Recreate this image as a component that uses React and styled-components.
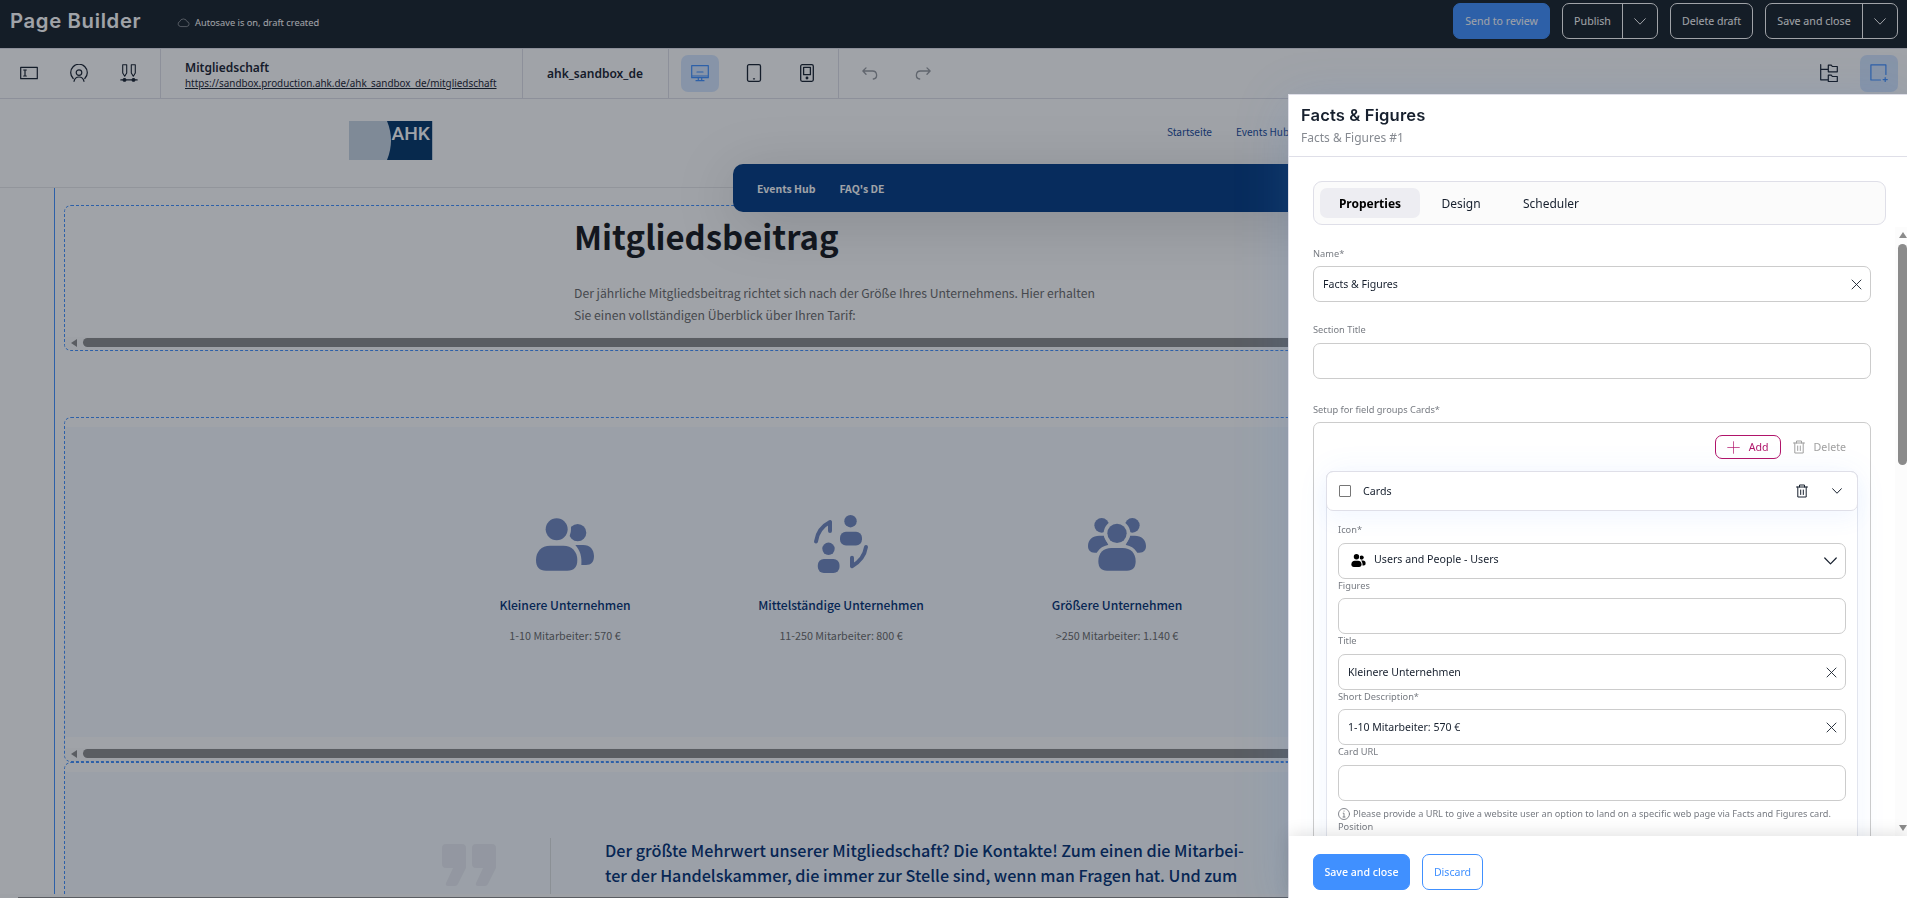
import React, { useState } from 'react';
import styled, { createGlobalStyle, ThemeProvider } from 'styled-components';

const theme = {
    ui: '"Noto Sans", sans-serif',
    title: 'Inter, "Noto Sans", sans-serif',
    site: '"Noto Sans CJK SC", "Noto Sans", sans-serif',
    colors: {
        dark: '#172029',
        text: '#17202e',
        muted: '#777b82',
        line: '#dfdfe8',
        field: '#cccccc',
        primary: '#4090ff',
        accent: '#b0146a',
        brand: '#002f73',
        figure: '#7188c0',
        soft: '#f7fbff',
    },
};

const GlobalStyle = createGlobalStyle`
    *, *::before, *::after {
        box-sizing: border-box;
    }
    html, body, #root {
        height: 100%;
    }
    body {
        margin: 0;
        overflow: hidden;
        background: #fff;
        color: ${theme.colors.text};
        font-family: ${theme.ui};
        font-size: 10.67px;
    }
    button, input {
        font: inherit;
    }
    p, h1, h2, h3 {
        margin: 0;
    }
`;

const Page = styled.div`
    display: flex;
    flex-direction: column;
    height: 100vh;
    overflow: hidden;
`;

const TopBar = styled.header`
    align-items: flex-start;
    background: ${({ theme }) => theme.colors.dark};
    display: flex;
    flex: 0 0 48px;
    padding: 3px 9px 0 10px;
`;

TopBar.Title = styled.h1`
    color: #fff;
    font-family: ${({ theme }) => theme.title};
    font-size: 20.3px;
    font-weight: 600;
    letter-spacing: .65px;
    line-height: 36px;
    white-space: nowrap;
    width: 167px;
`;

TopBar.Status = styled.div`
    align-items: center;
    color: #fff;
    display: flex;
    flex: 1;
    font-size: 9.25px;
    gap: 5px;
    height: 38px;
`;

TopBar.Actions = styled.div`
    display: flex;
    gap: 12px;
`;

const Button = styled.button`
    align-items: center;
    background: ${({ $filled, theme }) => ($filled ? theme.colors.primary : 'transparent')};
    border: 1px solid ${({ $filled, $tone, theme }) => ($filled ? theme.colors.primary : $tone || '#fff')};
    border-radius: 7px;
    color: ${({ $filled, $tone }) => ($filled ? '#fff' : $tone || '#fff')};
    display: flex;
    font-size: 10.6px;
    font-weight: ${({ $strong }) => ($strong ? 500 : 400)};
    height: ${({ $small }) => ($small ? 24 : 36)}px;
    justify-content: center;
    padding: 0 0 ${({ $small }) => ($small ? 0 : 1)}px;
    white-space: nowrap;
    width: ${({ $width }) => $width}px;
`;

const SplitButton = styled.div`
    border: 1px solid #fff;
    border-radius: 7px;
    color: #fff;
    display: flex;
    height: 36px;
    width: ${({ $width }) => $width}px;
`;

SplitButton.Label = styled.span`
    align-items: center;
    border-right: 1px solid #fff;
    display: flex;
    flex: 1;
    justify-content: center;
    padding-bottom: 1px;
`;

SplitButton.Toggle = styled.span`
    align-items: center;
    display: flex;
    justify-content: center;
    width: 34px;
`;

const Toolbar = styled.div`
    border: 1px solid ${({ theme }) => theme.colors.line};
    border-width: 1px 0;
    display: flex;
    flex: 0 0 51px;
`;

Toolbar.Group = styled.div`
    align-items: center;
    border-right: ${({ $last, theme }) => ($last ? 0 : `1px solid ${theme.colors.line}`)};
    display: flex;
    gap: ${({ $gap }) => $gap || 0}px;
    padding-left: ${({ $pad }) => $pad}px;
    width: ${({ $width }) => ($width ? `${$width}px` : 'auto')};
`;

Toolbar.End = styled.div`
    display: flex;
    gap: 12px;
    margin-left: auto;
    padding: 6px 9px 0 0;
`;

const IconButton = styled.button`
    align-items: center;
    background: ${({ $active }) => ($active ? '#d6e7ff' : 'transparent')};
    border: 0;
    border-radius: 7px;
    color: ${({ $active, $faded, theme }) => ($active ? theme.colors.primary : $faded ? '#96999f' : theme.colors.text)};
    display: flex;
    height: 37px;
    justify-content: center;
    padding: 0 0 1px;
    width: 38px;
`;

const PageInfo = styled.div`
    display: flex;
    flex-direction: column;
    padding-top: 4px;
`;

PageInfo.Name = styled.strong`
    font-size: 12px;
    font-weight: 600;
    line-height: 16px;
`;

PageInfo.Url = styled.a`
    color: ${({ theme }) => theme.colors.text};
    font-size: 9.9px;
    line-height: 15px;
    text-decoration: underline;
`;

const SiteHeader = styled.div`
    align-items: flex-start;
    border-bottom: 1px solid #e8e8ea;
    display: flex;
    flex: 0 0 89px;
    justify-content: space-between;
    padding: 22px 0 0 349px;
    position: relative;
`;

const SiteNav = styled.nav`
    color: #17489a;
    display: flex;
    font-family: ${({ theme }) => theme.site};
    font-size: 10.1px;
    gap: 24px;
    line-height: 22px;
    white-space: nowrap;
    width: 740px;
`;

const SubMenu = styled.div`
    align-items: center;
    background: #003a82;
    border-radius: 10px;
    box-shadow: 0 10px 60px rgba(0, 0, 0, .17);
    color: #fff;
    display: flex;
    font-family: ${({ theme }) => theme.site};
    font-size: 10.5px;
    font-weight: 700;
    gap: 24px;
    height: 48px;
    left: 733px;
    padding: 1px 0 0 24px;
    position: absolute;
    right: 0;
    top: 65px;
    z-index: 1;
`;

const Canvas = styled.main`
    border-left: 1px solid ${({ theme }) => theme.colors.primary};
    display: flex;
    flex: 1;
    flex-direction: column;
    font-family: ${({ theme }) => theme.site};
    margin-left: 54px;
    min-height: 0;
    overflow: hidden;
    padding: 17px 0 0 9px;
`;

const Section = styled.section`
    border: 1px dashed ${({ theme }) => theme.colors.primary};
    border-radius: 7px 0 0 7px;
    display: flex;
    flex: 0 0 ${({ $height }) => $height}px;
    flex-direction: column;
    margin-bottom: ${({ $after }) => $after || 0}px;
    overflow: hidden;
    padding-top: ${({ $top }) => $top || 0}px;
`;

const Intro = styled.div`
    flex: 1;
    padding: 10px 0 0 509px;
`;

Intro.Title = styled.h2`
    color: #14161a;
    font-size: 32.9px;
    font-weight: 700;
    line-height: 40px;
    margin-bottom: 26px;
`;

Intro.Text = styled.p`
    color: #696969;
    font-size: 12.2px;
    line-height: 22px;
    white-space: pre-line;
`;

const Facts = styled.div`
    background: ${({ theme }) => theme.colors.soft};
    display: grid;
    flex: 0 0 310px;
    grid-template-columns: repeat(3, 276px);
    margin-bottom: 11px;
    padding: 87px 0 0 362px;
`;

Facts.Card = styled.div`
    align-items: center;
    display: flex;
    flex-direction: column;
`;

Facts.Icon = styled.div`
    align-items: center;
    display: flex;
    height: 60px;
    justify-content: center;
    margin-bottom: 21px;
`;

Facts.Title = styled.h3`
    color: ${({ theme }) => theme.colors.brand};
    font-size: 12.1px;
    font-weight: 500;
    line-height: 20px;
    margin-bottom: 11px;
`;

Facts.Text = styled.p`
    color: #696969;
    font-size: 10.75px;
    line-height: 20px;
`;

const ScrollRow = styled.div`
    align-items: center;
    background: #fcfcfc;
    display: flex;
    flex: 0 0 13px;
    gap: 6px;
    padding: 0 0 2px 6px;
`;

ScrollRow.Thumb = styled.div`
    background: #8b8b8b;
    border-radius: 5px;
    flex: 1;
    height: 9px;
`;

const Quote = styled.div`
    background: ${({ theme }) => theme.colors.soft};
    display: flex;
    flex: 1;
    padding: 66px 0 0 377px;
`;

Quote.Mark = styled.div`
    padding-top: 6px;
    width: 108px;
`;

Quote.Text = styled.p`
    border-left: 1px solid #dcdfe0;
    color: ${({ theme }) => theme.colors.brand};
    font-size: 16.18px;
    font-weight: 500;
    line-height: 25px;
    padding-left: 54px;
    white-space: pre-line;
`;

const BottomScroll = styled.div`
    background: #fcfcfc;
    flex: 0 0 4px;
    padding: 3px 0 0 18px;
    &::after {
        background: #8b8b8b;
        content: '';
        display: block;
        height: 1px;
    }
`;

const Scrim = styled.div`
    background: rgba(18, 25, 37, .4);
    inset: 0;
    position: fixed;
    z-index: 2;
`;

const Panel = styled.aside`
    background: #fff;
    border: 1px solid ${({ theme }) => theme.colors.line};
    border-width: 1px 0 0 1px;
    bottom: 0;
    box-shadow: 0 10px 50px rgba(74, 124, 200, .22);
    display: flex;
    flex-direction: column;
    position: fixed;
    right: 0;
    top: 94px;
    width: 619px;
    z-index: 3;
`;

Panel.Header = styled.div`
    border-bottom: 1px solid ${({ theme }) => theme.colors.line};
    flex: 0 0 62px;
    padding: 9px 12px 0;
`;

Panel.Title = styled.h2`
    font-family: ${({ theme }) => theme.title};
    font-size: 16.6px;
    font-weight: 600;
    letter-spacing: .12px;
    line-height: 22px;
`;

Panel.Subtitle = styled.p`
    color: #868a91;
    font-size: 12px;
    line-height: 18px;
    padding-top: 3px;
`;

Panel.Body = styled.div`
    display: flex;
    flex: 1;
    min-height: 0;
`;

Panel.Form = styled.div`
    flex: 1;
    overflow: hidden;
    padding: 22px 24px 0;
`;

Panel.Footer = styled.div`
    background: #fff;
    box-shadow: 0 -2px 16px rgba(0, 0, 0, .12);
    display: flex;
    flex: 0 0 62px;
    gap: 12px;
    padding: 18px 24px 0;
    position: relative;
`;

const Tabs = styled.div`
    background: #fbfbfb;
    border: 1px solid ${({ theme }) => theme.colors.line};
    border-radius: 9px;
    display: flex;
    flex: 0 0 44px;
    margin: 24px 21px 0 24px;
    padding: 6px;
`;

Tabs.Item = styled.button`
    background: ${({ $active }) => ($active ? '#ededf2' : 'transparent')};
    border: 0;
    border-radius: 7px;
    color: ${({ $active, theme }) => ($active ? '#000' : theme.colors.text)};
    font-size: 12px;
    font-weight: ${({ $active }) => ($active ? 700 : 400)};
    height: 30px;
    padding: 0;
    width: ${({ $width }) => $width}px;
`;

const Label = styled.label`
    color: ${({ theme }) => theme.colors.muted};
    display: block;
    font-size: 9.27px;
    line-height: 13px;
    margin-bottom: ${({ $gap }) => $gap || 6}px;
`;

const Field = styled.div`
    align-items: center;
    background: #fff;
    border: 1px solid ${({ theme }) => theme.colors.field};
    border-radius: 7px;
    display: flex;
    height: 36px;
    margin-bottom: ${({ $after }) => $after || 0}px;
    padding: 0 8px 0 ${({ $start }) => $start || 9}px;
`;

Field.Input = styled.input`
    background: transparent;
    border: 0;
    color: ${({ theme }) => theme.colors.text};
    flex: 1;
    font-size: 10.55px;
    outline: 0;
    padding: 0;
`;

Field.Icon = styled.span`
    display: flex;
    padding-bottom: 2px;
`;

Field.Value = styled.span`
    flex: 1;
    padding: 0 0 4px 8px;
`;

const Group = styled.div`
    border: 1px solid ${({ theme }) => theme.colors.field};
    border-radius: 7px;
    height: 600px;
    padding: 12px 12px 0;
`;

Group.Actions = styled.div`
    align-items: center;
    display: flex;
    justify-content: flex-end;
    margin-bottom: 12px;
    padding-right: 12px;
`;

Group.Delete = styled.span`
    align-items: center;
    color: #a0a0a0;
    display: flex;
    gap: 9px;
    margin-left: 12px;
`;

const Card = styled.div`
    border: 1px solid #e2e5ee;
    border-radius: 7px;
    box-shadow: 0 0 32px rgba(64, 144, 255, .07);
    height: 560px;
`;

Card.Head = styled.div`
    align-items: center;
    border: 1px solid ${({ theme }) => theme.colors.line};
    border-radius: 7px;
    box-shadow: 0 10px 20px rgba(64, 144, 255, .06);
    display: flex;
    height: 40px;
    margin: -1px;
    padding: 0 15px 0 12px;
`;

Card.Check = styled.span`
    border: 1px solid #767676;
    border-radius: 1px;
    height: 12px;
    margin-right: 12px;
    width: 12px;
`;

Card.Name = styled.span`
    flex: 1;
    padding-bottom: 1px;
`;

Card.Tools = styled.span`
    align-items: center;
    display: flex;
    gap: 24px;
`;

Card.Body = styled.div`
    padding: 13px 11px 0;
`;

const Hint = styled.p`
    align-items: center;
    color: ${({ theme }) => theme.colors.muted};
    display: flex;
    font-size: 9.2px;
    gap: 3px;
    line-height: 13px;
    padding-top: 6px;
    white-space: nowrap;
`;

const Scroller = styled.div`
    align-items: center;
    background: #fcfcfc;
    display: flex;
    flex-direction: column;
    justify-content: space-between;
    margin-top: 2px;
    padding: 5px 0 5px 3px;
    width: 12px;
`;

Scroller.Thumb = styled.div`
    background: #8b8b8b;
    border-radius: 5px;
    height: 221px;
    margin: 6px 0 auto;
    width: 9px;
`;

/* icons */

const Line = ({ w, h, box, width = 1, children }) => (
    <svg width={w} height={h} viewBox={box || `0 0 ${w} ${h}`} fill="none" stroke="currentColor"
        strokeWidth={width} strokeLinecap="round" strokeLinejoin="round">
        {children}
    </svg>
);

const CloudIcon = () => (
    <Line w={13} h={11} width={.8}>
        <path d="M3.3 9.5a2.6 2.6 0 0 1-.5-5A3.800 3.800 0 0 1 10 4.600a2.500 2.500 0 0 1 .2 4.900z" opacity=".55" />
    </Line>
);

const ChevronIcon = ({ w = 12, h = 7, width }) => (
    <Line w={w} h={h} box="0 0 12 7" width={width}><path d="m.7.7 5.300 5.500L11.300.7" /></Line>
);

const CloseIcon = () => (
    <Line w={11} h={11} width={.9}><path d="m1 1 9 9M10 1l-9 9" /></Line>
);

const PlusIcon = () => (
    <Line w={22} h={13}><path d="M.7 6.500h11.600M6.500.7v11.600" opacity=".7" /></Line>
);

const TrashIcon = () => (
    <Line w={12} h={14}>
        <path d="M.5 3h11M3.500 3V1h5v2M1.800 3v10h8.400V3M4.700 6v4.500M7.300 6v4.500" />
    </Line>
);

const TextFieldIcon = () => (
    <Line w={18} h={18} width={1.2}>
        <path d="M.7 3.300h16.600v11.400H.7zM3.700 6h2.600M3.700 12h2.600M5 6v6" />
    </Line>
);

const PersonIcon = () => (
    <Line w={18} h={18} width={1.2}>
        <path d="M3.200 14.500a8.300 8.300 0 1 1 11.600 0" />
        <circle cx="9" cy="8.600" r="2.800" />
        <path d="M4 17.300c.6-2.900 2.400-4.300 5-4.300s4.400 1.400 5 4.300" />
    </Line>
);

const PencilsIcon = () => (
    <Line w={18} h={18} width={1.1}>
        <path d="M2.700.7h4v8.300l-2 3.200-2-3.200zM11.300.7h4v8.300l-2 3.200-2-3.200zM.8 15.900h16.400" />
        <circle cx="4.500" cy="15.900" r="1.400" fill="currentColor" />
        <circle cx="13.500" cy="15.900" r="1.400" fill="currentColor" />
    </Line>
);

const DesktopIcon = () => (
    <Line w={18} h={18} width={1.2}>
        <path d="M.7 1.700h16.600v12H.7zM6 8h6M7.300 13.700v3M10.700 13.700v3M5 16.700h8M.7 12h16.600" />
    </Line>
);

const TabletIcon = () => (
    <Line w={18} h={18} width={1.3}>
        <rect x="2.500" y=".7" width="13" height="16.600" rx="1.500" />
        <path d="M8.500 14.800h1" />
    </Line>
);

const PhoneIcon = () => (
    <Line w={18} h={18} width={1.3}>
        <rect x="2.700" y=".7" width="12.600" height="16.600" rx="1.500" />
        <path d="M5.600 3.300h6.800v7.400H5.600z" />
        <circle cx="9" cy="14" r=".8" fill="currentColor" />
    </Line>
);

const UndoIcon = ({ flip }) => (
    <Line w={16} h={13} width={1.3}>
        <path d="M4 .9.900 4 4 7.200M1.200 4h9.300c5 0 5.600 7.300.8 8" transform={flip ? 'translate(16) scale(-1 1)' : undefined} />
    </Line>
);

const TreeIcon = () => (
    <Line w={18} h={18} width={1.2}>
        <path d="M.7.7v15.100h7.600M.7 5.300h7.600M8.300 1.200h3l1 1.300h5v5.300h-9zM8.300 11.200h3l1 1.300h5v5h-9z" />
    </Line>
);

const AddBlockIcon = () => (
    <Line w={18} h={18} width={1.2}>
        <path d="M10.500 16H.9V.9h15v9.600M15.200 13.500v4.200M13.100 15.600h4.200" />
    </Line>
);

const AhkLogo = () => (
    <svg width="84" height="39" viewBox="0 0 84 39">
        <path d="M0 0h84v39H0z" fill="#c8d5e3" />
        <path d="M38 0h45v39H38q8-19.500 0-39z" fill="#003468" />
        <text x="42.500" y="19" fill="#fff" fontFamily="Roboto, sans-serif" fontSize="18.700" fontWeight="500" textLength="38.500" lengthAdjust="spacingAndGlyphs">AHK</text>
    </svg>
);

// gap is the colour of the outline that separates the front figure from those behind it
const UsersIcon = ({ w = 58, h = 53, color = theme.colors.figure, gap = theme.colors.soft }) => (
    <svg width={w} height={h} viewBox="0 0 174 159" fill={color}>
        <circle cx="125" cy="44" r="26" />
        <path d="M118 81h24c20 0 32 14 32 33 0 18-8 27-24 27h-14c2-24-3-43-18-60z" />
        <circle cx="62" cy="34" r="33" stroke={gap} strokeWidth="20" paintOrder="stroke" />
        <path d="M42 83h40c26 0 42 18 42 43 0 22-10 32-30 32H30c-20 0-30-10-30-32 0-25 16-43 42-43z" />
    </svg>
);

const ExchangeIcon = () => (
    <svg width="56" height="60" viewBox="813 514 56 60" fill={theme.colors.figure}>
        <circle cx="828.500" cy="548.800" r="6.200" />
        <rect x="817.800" y="559" width="21.700" height="14" rx="6" />
        <circle cx="850.500" cy="521.200" r="6.200" />
        <rect x="840" y="531.800" width="22" height="13.700" rx="6" />
        <path d="M816 541.500q2-13.500 14-19.500v9M866 547q-2 12.500-14 19.200v-8.400" fill="none"
            stroke={theme.colors.figure} strokeWidth="4" strokeLinecap="round" strokeLinejoin="round" />
    </svg>
);

const CrowdIcon = () => (
    <svg width="58" height="53" viewBox="0 0 174 159" fill={theme.colors.figure}>
        <circle cx="41" cy="22" r="22" />
        <circle cx="133" cy="22" r="22" />
        <path d="M34 53h14l14 30-30 21H20C6 104 0 96 0 84c0-19 14-31 34-31zM140 53h-14l-14 30 30 21h12c14 0 20-8 20-20 0-19-14-31-34-31z" />
        <circle cx="87" cy="46" r="29" stroke={theme.colors.soft} strokeWidth="22" paintOrder="stroke" />
        <path d="M70 90h34c24 0 39 16 39 39 0 20-8 29-26 29H57c-18 0-26-9-26-29 0-23 15-39 39-39z"
            stroke={theme.colors.soft} strokeWidth="20" paintOrder="stroke" />
    </svg>
);

const QuoteIcon = () => (
    <svg width="54" height="42" viewBox="0 0 54 42" fill="#eaecf3">
        <path d="M4 0h16q4 0 4 4v20l-8 16q-1 2-3 2H6q-3 0-2-3l7-15H4q-4 0-4-4V4q0-4 4-4zM34 0h16q4 0 4 4v20l-8 16q-1 2-3 2h-7q-3 0-2-3l7-15h-7q-4 0-4-4V4q0-4 4-4z" />
    </svg>
);

const InfoIcon = () => (
    <Line w={12} h={12} width={.9}>
        <circle cx="6" cy="6" r="5.500" />
        <path d="M5.200 5.200H6V9M5 9h2M6 3v.2" />
    </Line>
);

const Arrow = ({ points, w, h }) => (
    <svg width={w} height={h} fill="#8b8b8b"><polygon points={points} /></svg>
);

const facts = [
    { title: 'Kleinere Unternehmen', text: '1-10 Mitarbeiter: 570 €', icon: <UsersIcon /> },
    { title: 'Mittelständige Unternehmen', text: '11-250 Mitarbeiter: 800 €', icon: <ExchangeIcon /> },
    { title: 'Größere Unternehmen', text: '>250 Mitarbeiter: 1.140 €', icon: <CrowdIcon /> },
];

function TextField({ label, value: initial = '', gap, after }) {
    const [value, setValue] = useState(initial);
    return (
        <>
            <Label $gap={gap}>{label}</Label>
            <Field $after={after}>
                <Field.Input value={value} onChange={(event) => setValue(event.target.value)} />
                {value && <CloseIcon />}
            </Field>
        </>
    );
}

function Scrollbar() {
    return (
        <ScrollRow>
            <Arrow w={6} h={8} points="6,0 6,8 0,4" />
            <ScrollRow.Thumb />
        </ScrollRow>
    );
}

function Builder() {
    return (
        <Page>
            <TopBar>
                <TopBar.Title>Page Builder</TopBar.Title>
                <TopBar.Status><CloudIcon /> Autosave is on, draft created</TopBar.Status>
                <TopBar.Actions>
                    <Button $filled $width={97}>Send to review</Button>
                    <SplitButton $width={96}>
                        <SplitButton.Label>Publish</SplitButton.Label>
                        <SplitButton.Toggle><ChevronIcon /></SplitButton.Toggle>
                    </SplitButton>
                    <Button $width={83}>Delete draft</Button>
                    <SplitButton $width={133}>
                        <SplitButton.Label>Save and close</SplitButton.Label>
                        <SplitButton.Toggle><ChevronIcon /></SplitButton.Toggle>
                    </SplitButton>
                </TopBar.Actions>
            </TopBar>
            <Toolbar>
                <Toolbar.Group $width={161} $pad={10} $gap={12}>
                    <IconButton><TextFieldIcon /></IconButton>
                    <IconButton><PersonIcon /></IconButton>
                    <IconButton><PencilsIcon /></IconButton>
                </Toolbar.Group>
                <Toolbar.Group $width={362} $pad={24}>
                    <PageInfo>
                        <PageInfo.Name>Mitgliedschaft</PageInfo.Name>
                        <PageInfo.Url>https://sandbox.production.ahk.de/ahk_sandbox_de/mitgliedschaft</PageInfo.Url>
                    </PageInfo>
                </Toolbar.Group>
                <Toolbar.Group $width={146} $pad={24}>
                    <PageInfo.Name>ahk_sandbox_de</PageInfo.Name>
                </Toolbar.Group>
                <Toolbar.Group $width={170} $pad={12} $gap={15.5}>
                    <IconButton $active><DesktopIcon /></IconButton>
                    <IconButton><TabletIcon /></IconButton>
                    <IconButton><PhoneIcon /></IconButton>
                </Toolbar.Group>
                <Toolbar.Group $last $pad={12} $gap={15}>
                    <IconButton $faded><UndoIcon /></IconButton>
                    <IconButton $faded><UndoIcon flip /></IconButton>
                </Toolbar.Group>
                <Toolbar.End>
                    <IconButton><TreeIcon /></IconButton>
                    <IconButton $active><AddBlockIcon /></IconButton>
                </Toolbar.End>
            </Toolbar>
            <SiteHeader>
                <AhkLogo />
                <SiteNav>
                    <span>Startseite</span>
                    <span>Events Hub</span>
                </SiteNav>
                <SubMenu>
                    <span>Events Hub</span>
                    <span>FAQ's DE</span>
                </SubMenu>
            </SiteHeader>
            <Canvas>
                <Section $height={146} $after={66}>
                    <Intro>
                        <Intro.Title>Mitgliedsbeitrag</Intro.Title>
                        <Intro.Text>
                            {'Der jährliche Mitgliedsbeitrag richtet sich nach der Größe Ihres Unternehmens. Hier erhalten\nSie einen vollständigen Überblick über Ihren Tarif:'}
                        </Intro.Text>
                    </Intro>
                    <Scrollbar />
                </Section>
                <Section $height={345} $top={9}>
                    <Facts>
                        {facts.map((fact) => (
                            <Facts.Card key={fact.title}>
                                <Facts.Icon>{fact.icon}</Facts.Icon>
                                <Facts.Title>{fact.title}</Facts.Title>
                                <Facts.Text>{fact.text}</Facts.Text>
                            </Facts.Card>
                        ))}
                    </Facts>
                    <Scrollbar />
                </Section>
                <Section $height={300} $top={9}>
                    <Quote>
                        <Quote.Mark><QuoteIcon /></Quote.Mark>
                        <Quote.Text>
                            {'Der größte Mehrwert unserer Mitgliedschaft? Die Kontakte! Zum einen die Mitarbei-\nter der Handelskammer, die immer zur Stelle sind, wenn man Fragen hat. Und zum'}
                        </Quote.Text>
                    </Quote>
                </Section>
            </Canvas>
            <BottomScroll />
        </Page>
    );
}

function PropertiesPanel() {
    const [tab, setTab] = useState('Properties');
    return (
        <Panel>
            <Panel.Header>
                <Panel.Title>Facts &amp; Figures</Panel.Title>
                <Panel.Subtitle>Facts &amp; Figures #1</Panel.Subtitle>
            </Panel.Header>
            <Tabs>
                {[['Properties', 100], ['Design', 82], ['Scheduler', 98]].map(([name, width]) => (
                    <Tabs.Item key={name} $width={width} $active={tab === name} onClick={() => setTab(name)}>
                        {name}
                    </Tabs.Item>
                ))}
            </Tabs>
            <Panel.Body>
                <Panel.Form>
                    <TextField label="Name*" value="Facts & Figures" after={21} />
                    <TextField label="Section Title" gap={7} after={24} />
                    <Label>Setup for field groups Cards*</Label>
                    <Group>
                        <Group.Actions>
                            <Button $small $tone={theme.colors.accent} $width={66}><PlusIcon /> Add</Button>
                            <Group.Delete><TrashIcon /> Delete</Group.Delete>
                        </Group.Actions>
                        <Card>
                            <Card.Head>
                                <Card.Check />
                                <Card.Name>Cards</Card.Name>
                                <Card.Tools>
                                    <TrashIcon />
                                    <ChevronIcon w={10} h={6} width={1.2} />
                                </Card.Tools>
                            </Card.Head>
                            <Card.Body>
                                <Label $gap={7}>Icon*</Label>
                                <Field $start={12}>
                                    <Field.Icon><UsersIcon w={15} h={13} color="#000" gap="#fff" /></Field.Icon>
                                    <Field.Value>Users and People - Users</Field.Value>
                                    <ChevronIcon w={13} h={8} width={1.1} />
                                </Field>
                                <TextField label="Figures" />
                                <TextField label="Title" value="Kleinere Unternehmen" gap={7} />
                                <TextField label="Short Description*" value="1-10 Mitarbeiter: 570 €" />
                                <TextField label="Card URL" gap={7} />
                                <Hint>
                                    <InfoIcon />
                                    Please provide a URL to give a website user an option to land on a specific web page via Facts and Figures card.
                                </Hint>
                                <Label>Position</Label>
                            </Card.Body>
                        </Card>
                    </Group>
                </Panel.Form>
                <Scroller>
                    <Arrow w={8} h={6} points="4,0 8,6 0,6" />
                    <Scroller.Thumb />
                    <Arrow w={8} h={6} points="0,0 8,0 4,6" />
                </Scroller>
            </Panel.Body>
            <Panel.Footer>
                <Button $filled $strong $width={97}>Save and close</Button>
                <Button $tone={theme.colors.primary} $width={61}>Discard</Button>
            </Panel.Footer>
        </Panel>
    );
}

export default function App() {
    return (
        <ThemeProvider theme={theme}>
            <GlobalStyle />
            <Builder />
            <Scrim />
            <PropertiesPanel />
        </ThemeProvider>
    );
}
